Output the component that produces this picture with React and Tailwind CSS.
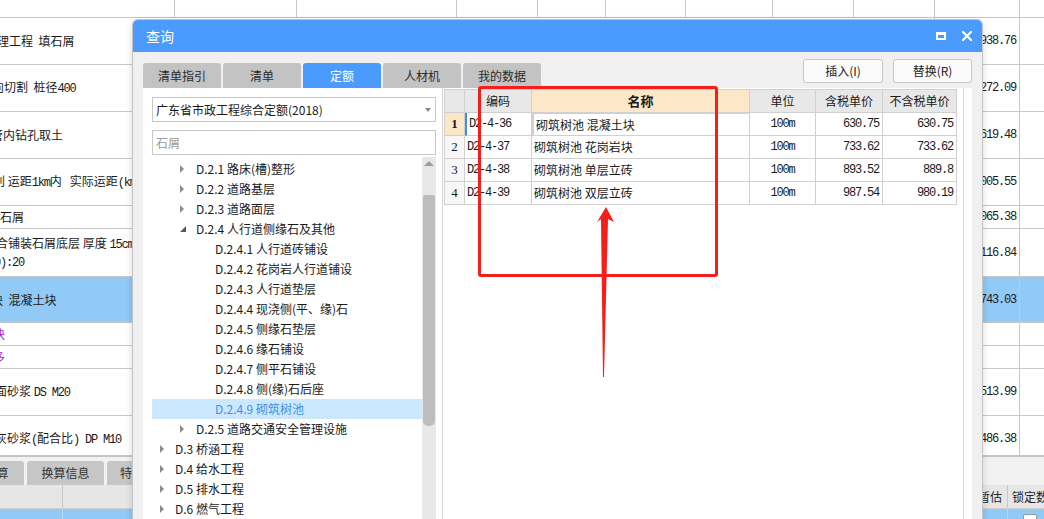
import React from "react";

// background sheet rows (left text is cut by the dialog / window edge)
const rows = [
  { h: "h-[47px]", v: "1938.76", lines: [{ t: "理工程  填石屑", ml: "-ml-[3px]" }] },
  { h: "h-[47px]", v: "1272.09", lines: [{ t: "向切割  桩径400", ml: "-ml-[8px]" }] },
  { h: "h-[47px]", v: "1619.48", lines: [{ t: "管内钻孔取土", ml: "-ml-[9px]" }] },
  { h: "h-[47px]", v: "1005.55", lines: [{ t: "别 运距1km内   实际运距(km)", ml: "-ml-[7px]" }] },
  { h: "h-[23px]", v: "1065.38", lines: [{ t: "石屑", ml: "" }] },
  {
    h: "h-[48px]",
    v: "2116.84",
    lines: [
      { t: "合铺装石屑底层 厚度 15cm", ml: "-ml-[4px]" },
      { t: "0):20", ml: "-ml-[6px]" },
    ],
  },
  { h: "h-[46px]", v: "1743.03", sel: true, lines: [{ t: "块  混凝土块", ml: "-ml-[9px]" }] },
  { h: "h-[23px]", v: "", purple: true, lines: [{ t: "块", ml: "-ml-[7px]" }] },
  { h: "h-[23px]", v: "", purple: true, lines: [{ t: "多", ml: "-ml-[7px]" }] },
  { h: "h-[47px]", v: "1513.99", lines: [{ t: "面砂浆 DS M20", ml: "-ml-[5px]" }] },
  { h: "h-[47px]", v: "1486.38", lines: [{ t: "灰砂浆(配合比) DP M10", ml: "-ml-[5px]" }] },
];

const topCols = [
  "w-[175px]", "w-[122px]", "w-[160px]", "w-[81px]", "w-[68px]",
  "w-[80px]", "w-[87px]", "w-[81px]", "w-[81px]", "w-[85px]",
];

const tree = [
  { lv: 2, icon: "closed", t: "D.2.1 路床(槽)整形" },
  { lv: 2, icon: "closed", t: "D.2.2 道路基层" },
  { lv: 2, icon: "closed", t: "D.2.3 道路面层" },
  { lv: 2, icon: "open", t: "D.2.4 人行道侧缘石及其他" },
  { lv: 3, t: "D.2.4.1 人行道砖铺设" },
  { lv: 3, t: "D.2.4.2 花岗岩人行道铺设" },
  { lv: 3, t: "D.2.4.3 人行道垫层" },
  { lv: 3, t: "D.2.4.4 现浇侧(平、缘)石" },
  { lv: 3, t: "D.2.4.5 侧缘石垫层" },
  { lv: 3, t: "D.2.4.6 缘石铺设" },
  { lv: 3, t: "D.2.4.7 侧平石铺设" },
  { lv: 3, t: "D.2.4.8 侧(缘)石后座" },
  { lv: 3, t: "D.2.4.9 砌筑树池", sel: true },
  { lv: 2, icon: "closed", t: "D.2.5 道路交通安全管理设施" },
  { lv: 1, icon: "closed", t: "D.3 桥涵工程" },
  { lv: 1, icon: "closed", t: "D.4 给水工程" },
  { lv: 1, icon: "closed", t: "D.5 排水工程" },
  { lv: 1, icon: "closed", t: "D.6 燃气工程" },
];

const items = [
  { no: "1", code: "D2-4-36", name: "砌筑树池 混凝土块", unit: "100m", p1: "630.75", p2: "630.75" },
  { no: "2", code: "D2-4-37", name: "砌筑树池 花岗岩块", unit: "100m", p1: "733.62", p2: "733.62" },
  { no: "3", code: "D2-4-38", name: "砌筑树池 单层立砖", unit: "100m", p1: "893.52", p2: "889.8" },
  { no: "4", code: "D2-4-39", name: "砌筑树池 双层立砖", unit: "100m", p1: "987.54", p2: "980.19" },
];

// latin runs in the old song-style mono face, the rest in CJK
function Mixed({ text }) {
  const parts = text.split(/([\x21-\x7e][\x20-\x7e]*)/);
  return parts.map((p, i) =>
    /^[\x21-\x7e]/.test(p) ? (
      <span key={i} className="font-['Liberation_Mono',monospace] tracking-[-1.2px]">{p}</span>
    ) : (
      <span key={i}>{p}</span>
    )
  );
}

function Sheet() {
  return (
    <div className="flex flex-col h-full">
      <div className="h-[455px] shrink-0 overflow-hidden flex flex-col">
        <div className="flex h-[18px] shrink-0 border-b border-[#c8c8c8]">
          {topCols.map((w, i) => (
            <div key={i} className={`${w} border-r border-[#c8c8c8]`} />
          ))}
          <div className="flex-1" />
        </div>
        {rows.map((r, i) => (
          <div
            key={i}
            className={`flex shrink-0 border-b border-[#c8c8c8] ${r.h} ${r.sel ? "bg-[#91c9f7]" : ""}`}
          >
            <div className="flex-1 flex flex-col justify-center overflow-hidden border-r border-[#c8c8c8] text-[12px] leading-[16px]">
              {r.lines.map((l, j) => (
                <div key={j} className={`whitespace-pre ${l.ml} ${r.purple ? "text-[#a21fd0]" : "text-[#1a1a1a]"}`}>
                  <Mixed text={l.t} />
                </div>
              ))}
            </div>
            <div className="w-[85px] flex items-center justify-end pr-[3px] border-r border-[#c8c8c8] text-[12px] text-[#1a1a1a] font-['Liberation_Mono',monospace] tracking-[-1.2px]">
              {r.v}
            </div>
            <div className="w-[24px]" />
          </div>
        ))}
      </div>

      <div className="flex-1 border-t-2 border-[#c4c4c4] bg-[#f2f2f2] flex flex-col">
        <div className="h-[28px] shrink-0 flex items-end gap-[3px]">
          <div className="-ml-[55px] w-[79px] h-[24px] rounded-t-[3px] bg-[#c6c6c6] flex items-center justify-center text-[12px] text-[#333]">标准换算</div>
          <div className="w-[77px] h-[24px] rounded-t-[3px] bg-[#c6c6c6] flex items-center justify-center text-[12px] text-[#333]">换算信息</div>
          <div className="w-[77px] h-[24px] rounded-t-[3px] bg-[#c6c6c6] flex items-center pl-[13px] whitespace-nowrap text-[12px] text-[#333]">特征及内容</div>
        </div>
        <div className="h-[24px] shrink-0 bg-[#e6e6e6] border-b border-[#d0d0d0] flex text-[12px] text-[#222]">
          <div className="w-[63px] border-r border-[#c8c8c8]" />
          <div className="flex-1" />
          <div className="w-[36px] flex items-center justify-center border-x border-[#c8c8c8]">暂估</div>
          <div className="w-[36px] pl-[4px] flex items-center whitespace-nowrap overflow-hidden">锁定数量</div>
        </div>
        <div className="flex-1 bg-[#91c9f7] flex">
          <div className="w-[63px] border-r border-[#b8d8f0]" />
          <div className="flex-1" />
          <div className="w-[36px] border-x border-[#b8d8f0]" />
          <div className="w-[36px] pl-[15px] pt-[5px]">
            <div className="w-[14px] h-[14px] rounded-[2px] bg-white border border-[#999]" />
          </div>
        </div>
      </div>
    </div>
  );
}

function TreeIcon({ kind }) {
  if (kind === "closed")
    return <div className="w-0 h-0 border-y-[4px] border-y-transparent border-l-[4px] border-l-[#8c8c8c]" />;
  if (kind === "open")
    return (
      <svg width="6" height="6" viewBox="0 0 6 6">
        <polygon points="6,0 6,6 0,6" fill="#595959" />
      </svg>
    );
  return null;
}

function LeftPanel() {
  return (
    <div className="w-[300px] shrink-0 bg-white border-r border-[#d4d4d4] flex flex-col pl-[9px] pr-[6px] overflow-hidden">
      <div className="mt-[9px] h-[25px] shrink-0 border border-[#c8c8c8] flex items-center justify-between px-[3px] text-[12px] text-[#1a1a1a]">
        <span>广东省市政工程综合定额(2018)</span>
        <div className="mr-[1px] w-0 h-0 border-x-[3px] border-x-transparent border-t-[4px] border-t-[#8a8a8a]" />
      </div>
      <div className="mt-[8px] h-[25px] shrink-0 border border-[#c8c8c8] flex items-center px-[3px] text-[12px] text-[#9a9a9a]">
        石屑
      </div>
      <div className="mt-[2px] flex-1 flex min-h-0">
        <div className="flex-1 pt-[2px]">
          {tree.map((n, i) => (
            <div
              key={i}
              className={`h-[20px] flex items-center text-[12px] whitespace-nowrap ${
                n.sel ? "bg-[#cce8ff] text-[#3d8fe8]" : "text-[#1a1a1a]"
              } ${n.lv === 1 ? "pl-[8px]" : n.lv === 2 ? "pl-[28px]" : "pl-[63px]"}`}
            >
              {n.icon && (
                <div className={`${n.lv === 1 ? "w-[15px]" : "w-[16px]"} flex items-center`}>
                  <TreeIcon kind={n.icon} />
                </div>
              )}
              <span>{n.t}</span>
            </div>
          ))}
        </div>
        <div className="w-[14px] bg-[#e8e8e8] flex flex-col items-center">
          <div className="mt-[4px] w-0 h-0 border-x-[5px] border-x-transparent border-b-[5px] border-b-[#9c9c9c]" />
          <div className="mt-[29px] w-[12px] h-[231px] rounded-b-[5px] rounded-t-[2px] bg-[#bdbdbd]" />
        </div>
      </div>
    </div>
  );
}

function ResultTable() {
  const cell = "border-r border-b border-[#d0d0d0] flex items-center";
  return (
    <div className="flex-1 flex min-w-0 bg-white">
      <div className="flex-1 pl-[1px] pt-[1px]">
        <div className="grid grid-cols-[20px_67px_218px_66px_67px_74px] w-fit border-l border-t border-[#d0d0d0] text-[12px] text-[#1a1a1a]">
          <div className={`${cell} h-[23px] bg-[#e8e8e8]`} />
          <div className={`${cell} bg-[#e8e8e8] justify-center`}>编码</div>
          <div className={`${cell} bg-[#fde7c9] justify-center font-bold text-[13px]`}>名称</div>
          <div className={`${cell} bg-[#e8e8e8] justify-center`}>单位</div>
          <div className={`${cell} bg-[#e8e8e8] justify-center`}>含税单价</div>
          <div className={`${cell} bg-[#e8e8e8] justify-center`}>不含税单价</div>
          {items.map((r, i) => (
            <React.Fragment key={i}>
              <div
                className={`${cell} h-[23px] justify-center font-['Liberation_Serif',serif] text-[13px] ${
                  i === 0 ? "bg-[#fde7c9] font-bold" : "bg-[#f7f7f7]"
                }`}
              >
                {r.no}
              </div>
              <div className={`${cell} pl-[2px] font-['Liberation_Mono',monospace] tracking-[-1.2px] ${i === 0 ? "border-l-2 border-l-[#3d8fe8]" : ""}`}>
                {r.code}
              </div>
              <div className={`${cell} pl-[2px] ${i === 0 ? "border-2 border-[#3d8fe8] -mt-px" : ""}`}>
                {r.name}
              </div>
              <div className={`${cell} justify-center font-['Liberation_Mono',monospace] tracking-[-1.2px]`}>{r.unit}</div>
              <div className={`${cell} justify-end pr-[3px] font-['Liberation_Mono',monospace] tracking-[-1.2px]`}>{r.p1}</div>
              <div className={`${cell} justify-end pr-[3px] font-['Liberation_Mono',monospace] tracking-[-1.2px]`}>{r.p2}</div>
            </React.Fragment>
          ))}
        </div>
      </div>
      <div className="w-[9px] border-l border-[#d8d8d8]" />
    </div>
  );
}

function Dialog() {
  const tabs = ["清单指引", "清单", "定额", "人材机", "我的数据"];
  return (
    <div className="absolute left-[133px] top-[20px] w-[849px] h-[510px] flex flex-col rounded-t-[5px] overflow-hidden bg-[#f0f0f0] shadow-[0_0_0_1px_#c4c4c4,0_2px_8px_rgba(0,0,0,0.18)]">
      <div className="h-[32px] shrink-0 bg-[#4a9bfd] flex items-center justify-between pl-[13px] pr-[10px] text-white text-[14px]">
        <span>查询</span>
        <div className="flex items-center gap-[16px]">
          <div className="w-[10px] h-[8px] border-2 border-t-[3px] border-white" />
          <svg width="10" height="10" viewBox="0 0 10 10">
            <path d="M1 1 L9 9 M9 1 L1 9" stroke="white" strokeWidth="2.2" strokeLinecap="square" />
          </svg>
        </div>
      </div>
      <div className="flex-1 flex flex-col px-[10px] min-h-0">
        <div className="h-[36px] shrink-0 flex justify-between">
          <div className="self-end flex gap-[2px]">
            {tabs.map((t) => (
              <div
                key={t}
                className={`w-[78px] h-[25px] rounded-t-[3px] flex items-center justify-center text-[12px] ${
                  t === "定额" ? "bg-[#4a9bfd] text-white" : "bg-[#c3c3c3] text-[#2a2a2a]"
                }`}
              >
                {t}
              </div>
            ))}
          </div>
          <div className="pt-[7px] flex gap-[10px]">
            <div className="w-[80px] h-[24px] border border-[#c6c6c6] rounded-[3px] bg-[#fbfbfb] flex items-center justify-center text-[12px] text-[#222]">插入(I)</div>
            <div className="w-[79px] h-[24px] border border-[#c6c6c6] rounded-[3px] bg-[#fbfbfb] flex items-center justify-center text-[12px] text-[#222]">替换(R)</div>
          </div>
        </div>
        <div className="flex-1 flex min-h-0">
          <LeftPanel />
          <ResultTable />
        </div>
      </div>
    </div>
  );
}

export default function App() {
  return (
    <div className="relative w-[1044px] h-[519px] overflow-hidden bg-white font-['Noto_Sans_CJK_SC',sans-serif]">
      <Sheet />
      <Dialog />
      {/* annotation */}
      <div className="absolute left-[478px] top-[86px] w-[240px] h-[191px] border-[3px] border-[#f41f1a] rounded-[3px]" />
      <svg className="absolute left-0 top-0 pointer-events-none" width="1044" height="519" viewBox="0 0 1044 519">
        <polygon points="606,207 614,222 608,219 604,377 603,377 601,219 597,222" fill="#f41f1a" />
      </svg>
    </div>
  );
}
